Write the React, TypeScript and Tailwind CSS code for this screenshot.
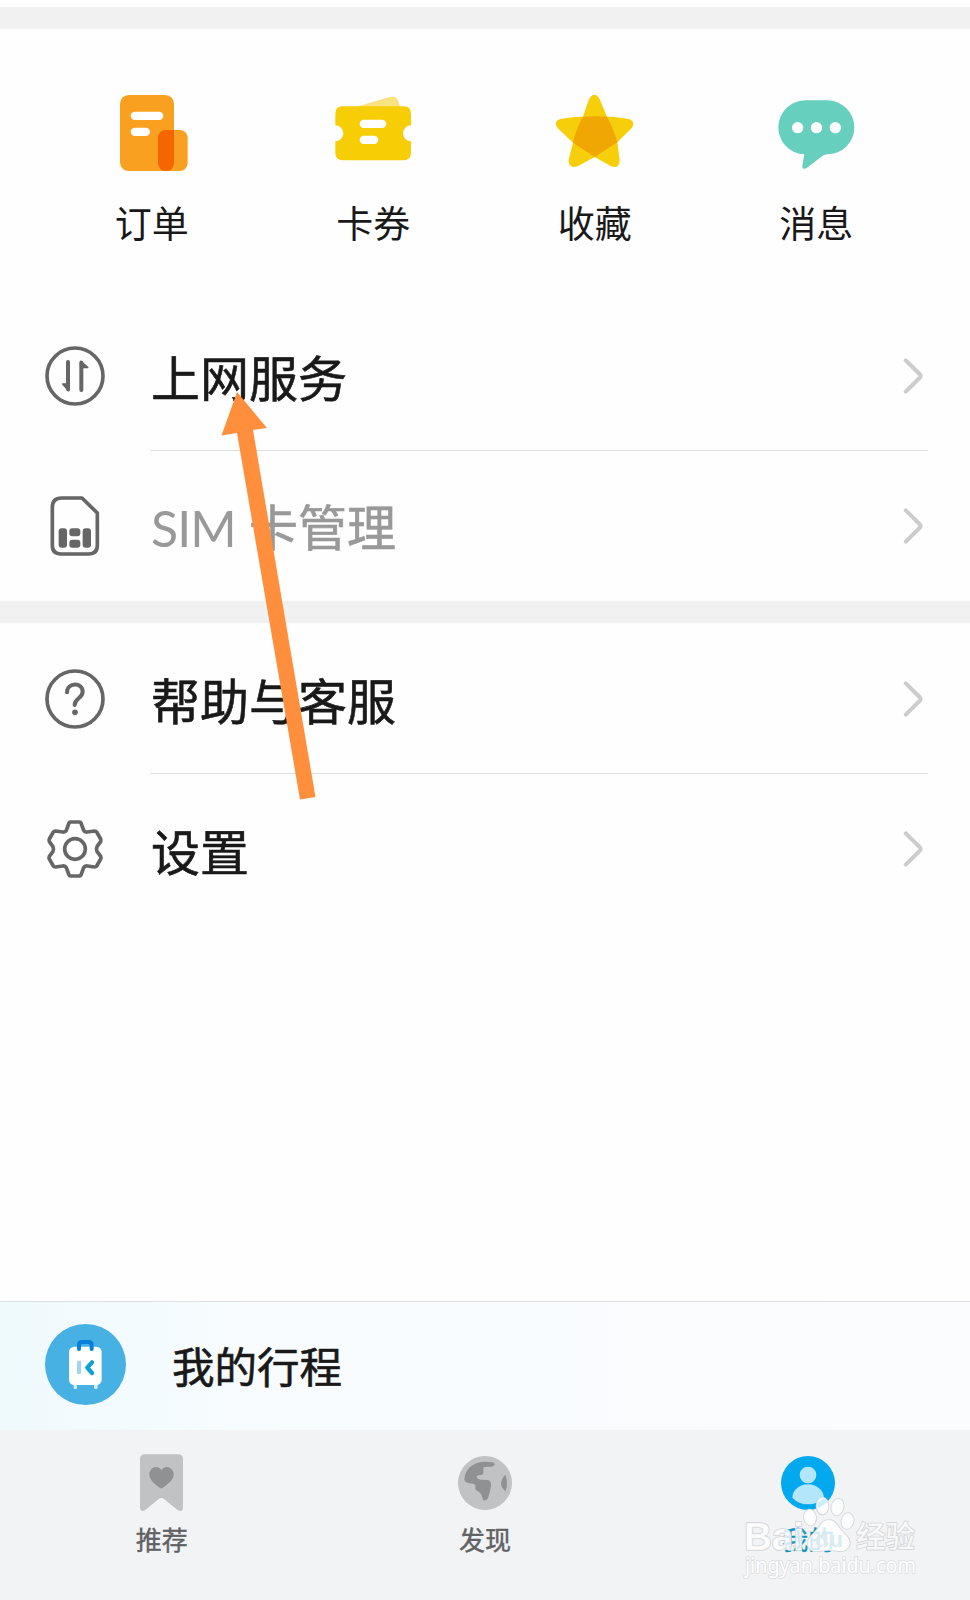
import type { ReactNode } from 'react';
import { clsx } from 'clsx';

interface MenuRowProps {
  icon: ReactNode;
  children: ReactNode;
  muted?: boolean;
  divider?: boolean;
}

function OrderIcon() {
  return (
    <svg viewBox="0 0 240 240" className="size-20">
      <rect x="24" y="6" width="162" height="228" rx="26" fill="#f9a021" />
      <rect x="138" y="111" width="89" height="123" rx="24" fill="#f9a021" />
      <rect x="138" y="111" width="48" height="123" rx="23" fill="#f56500" />
      <path d="M162 111 H186 V134 Z" fill="#f56500" />
      <rect x="56" y="56" width="98" height="25" rx="12.5" fill="#fff" />
      <rect x="56" y="104" width="58" height="25" rx="12.5" fill="#fff" />
    </svg>
  );
}

function CouponIcon() {
  return (
    <svg viewBox="0 0 240 240" className="size-20">
      <path d="M60 44 L170 12 Q192 7 197 26 L202 44 Z" fill="#fae182" />
      <path
        d="M29 40 H212 Q234 40 234 62 V97 A24 24 0 0 0 234 145 V180 Q234 202 212 202 H29 Q7 202 7 180 V145 A24 24 0 0 0 7 97 V62 Q7 40 29 40 Z"
        fill="#f7ce05"
      />
      <rect x="80" y="80" width="80" height="25" rx="12.5" fill="#fff" />
      <rect x="80" y="128" width="56" height="25" rx="12.5" fill="#fff" />
    </svg>
  );
}

function StarIcon() {
  return (
    <svg viewBox="0 0 240 240" className="size-20">
      <path
        d="M102 18 Q118 -8 134 18 L156 71 L187 148 L194 200 Q194 229 168 220 L119 192 L68 220 Q40 228 41 200 L54 149 L84 71 Z"
        fill="#f6cf0a"
      />
      <path
        d="M16 78 Q50 71 118 70 Q186 71 221 78 Q242 84 231 104 L187 148 L119 192 L54 149 L7 104 Q-5 84 16 78 Z"
        fill="#f6cf0a"
      />
      <path d="M84 71 Q120 69 156 71 Q178 112 187 148 L119 192 L54 149 Q62 110 84 71 Z" fill="#f1a703" />
    </svg>
  );
}

function MessageIcon() {
  return (
    <svg viewBox="0 0 240 240" className="size-20">
      <g transform="translate(3 0)">
        <path
          d="M88 22 H151 A81 81 0 0 1 151 184 Q140 184 132 192 L88 226 Q76 231 76 218 L82 184 A81 81 0 0 1 88 22 Z"
          fill="#66cfbe"
        />
        <circle cx="62" cy="104" r="17" fill="#fff" />
        <circle cx="118.500" cy="104" r="17" fill="#fff" />
        <circle cx="175" cy="104" r="17" fill="#fff" />
      </g>
    </svg>
  );
}

function DataIcon() {
  return (
    <svg viewBox="0 0 180 180" className="size-15" fill="none" stroke="#666" strokeLinecap="round" strokeLinejoin="round">
      <circle cx="90" cy="90" r="84" strokeWidth="11" />
      <path d="M69 48 V130" strokeWidth="12" />
      <path d="M71 134 L53 114 H71 Z" strokeWidth="5" fill="#666" />
      <path d="M109 132 V50" strokeWidth="12" />
      <path d="M107 46 L128 64 H107 Z" strokeWidth="5" fill="#666" />
    </svg>
  );
}

function SimIcon() {
  return (
    <svg viewBox="0 0 180 180" className="size-15">
      <path
        d="M50 6 H111 L157 51 V148 Q157 174 131 174 H48 Q22 174 22 148 V34 Q22 6 50 6 Z"
        fill="none"
        stroke="#666"
        strokeWidth="11"
        strokeLinejoin="round"
      />
      <g fill="#666">
        <rect x="41" y="97" width="25" height="58" rx="9" />
        <rect x="73" y="97" width="33" height="24" rx="9" />
        <rect x="73" y="131" width="33" height="24" rx="9" />
        <rect x="113" y="97" width="25" height="58" rx="9" />
      </g>
    </svg>
  );
}

function HelpIcon() {
  return (
    <svg viewBox="0 0 180 180" className="size-15" fill="none" stroke="#666" strokeLinecap="round">
      <circle cx="90" cy="90" r="84" strokeWidth="11" />
      <path d="M66 70 C67 39 113 39 113 68 C113 88 89 88 89 108" strokeWidth="12" />
      <circle cx="90" cy="130" r="8.500" fill="#666" stroke="none" />
    </svg>
  );
}

function GearIcon() {
  return (
    <svg viewBox="0 0 180 180" className="size-15" fill="none" stroke="#666" strokeWidth="11" strokeLinejoin="round">
      <path d="M76 9 H104 Q107 9 108 12 L116 34 Q119 40 127 39 L149 36 Q153 36 155 39 L167 60 Q169 64 167 68 L156 83 Q153 90 156 97 L167 112 Q169 116 167 120 L155 141 Q153 144 149 144 L127 141 Q119 140 116 146 L108 168 Q107 171 104 171 H76 Q73 171 72 168 L64 146 Q61 140 53 141 L31 144 Q27 144 25 141 L13 120 Q11 116 13 112 L24 97 Q27 90 24 83 L13 68 Q11 64 13 60 L25 39 Q27 36 31 36 L53 39 Q61 40 64 34 L72 12 Q73 9 76 9 Z" />
      <circle cx="90" cy="90" r="31" />
    </svg>
  );
}

function Chevron() {
  return (
    <svg viewBox="0 0 20 36" className="h-9 w-5" fill="none" stroke="#ccc" strokeWidth="4" strokeLinecap="round" strokeLinejoin="round">
      <path d="M2.800 2.400 L17 16.500 Q18.200 18 17 19.500 L2.800 33.600" />
    </svg>
  );
}

function SuitcaseIcon() {
  return (
    <svg viewBox="0 0 243 243" className="-mt-[3px] size-[81px]">
      <circle cx="121.500" cy="121.500" r="121.500" fill="#47b1e3" />
      <path d="M86 180 H96 V191 Q96 195 91 195 Q86 195 86 191 Z M147 180 H158 V191 Q158 195 153 195 Q147 195 147 191 Z" fill="#d5effa" />
      <rect x="72" y="68" width="98" height="115" rx="16" fill="#fff" />
      <path d="M102 75 V63 Q102 54 111 54 H131 Q140 54 140 63 V75" fill="none" stroke="#0a7fd8" strokeWidth="12" strokeLinecap="round" />
      <rect x="96" y="110" width="12" height="40" rx="3" fill="#a0d6ec" />
      <path d="M141 115 L127 131 L141 147" fill="none" stroke="#0ea3cf" strokeWidth="13" strokeLinecap="round" strokeLinejoin="round" />
    </svg>
  );
}

function BookmarkIcon() {
  return (
    <svg viewBox="0 0 180 180" className="size-15">
      <g transform="translate(-2 0)">
        <path d="M40 4 H141 Q155 4 155 18 V161 Q155 180 139 171 L98 138 Q90 132 82 138 L42 171 Q26 180 26 161 V18 Q26 4 40 4 Z" fill="#c1c2c4" />
        <path d="M90 51 C102 34 127 43 127 65 C127 82 104 96 95 104 Q90 108 85 104 C76 96 54 82 54 65 C54 43 79 34 90 51 Z" fill="#909193" />
      </g>
    </svg>
  );
}

function GlobeIcon() {
  return (
    <svg viewBox="0 0 180 180" className="size-15">
      <circle cx="90" cy="90" r="81" fill="#c1c2c4" />
      <g fill="#909193">
        <path d="M28 79 Q29 58 45 42 Q70 21 112 28 Q121 31 118 37 Q116 42 107 41 L89 42 Q83 43 85 50 V60 Q85 66 78 66 Q66 66 65 72 Q66 79 78 80 L98 81 Q109 83 108 97 Q107 115 99 135 Q96 143 90 142 Q84 143 83 137 Q81 125 75 119 Q62 113 61 106 Q63 94 55 92 Q28 92 28 79 Z" />
        <path d="M151 65 Q156 78 156 90 Q156 102 152 115 Q139 106 138 91 Q139 77 151 65 Z" />
      </g>
    </svg>
  );
}

function ProfileIcon() {
  return (
    <svg viewBox="0 0 180 180" className="size-15">
      <circle cx="90" cy="90" r="81" fill="#03a9ef" />
      <g fill="#b3e6fb">
        <circle cx="90" cy="66" r="25" />
        <path d="M43 134 C46 80 133 80 138 134 Q118 154 90 154 Q62 154 43 134 Z" />
      </g>
    </svg>
  );
}

const shortcuts = [
  { label: '订单', icon: <OrderIcon /> },
  { label: '卡券', icon: <CouponIcon /> },
  { label: '收藏', icon: <StarIcon /> },
  { label: '消息', icon: <MessageIcon /> },
];

const tabs = [
  { label: '推荐', icon: <BookmarkIcon />, active: false },
  { label: '发现', icon: <GlobeIcon />, active: false },
  { label: '我的', icon: <ProfileIcon />, active: true },
];

function MenuRow({ icon, children, muted, divider }: MenuRowProps) {
  return (
    <div className={clsx('flex pl-[45px]', divider ? 'h-[151px]' : 'h-[150px]')}>
      <div className="flex w-[105px] items-center">{icon}</div>
      <div
        className={clsx(
          'mr-[42px] flex flex-1 items-center justify-between border-b pt-px pr-[5.5px]',
          divider ? 'border-[#dedede]' : 'border-transparent',
        )}
      >
        <span
          className={clsx(
            'ml-px flex text-[49px] leading-none font-normal whitespace-pre [-webkit-text-stroke-width:0.6px]',
            muted ? 'text-[#999]' : 'text-[#191919]',
          )}
        >
          {children}
        </span>
        <Chevron />
      </div>
    </div>
  );
}

function Watermark() {
  return (
    <svg
      viewBox="0 0 190 100"
      className="pointer-events-none absolute right-[45px] bottom-[10px] h-[100px] w-[190px] overflow-visible"
    >
      <g fill="#fff" fillOpacity="0.8" stroke="#d3d5d8" strokeWidth="1.600" paintOrder="stroke">
        <ellipse cx="75" cy="27.500" rx="6" ry="8" transform="rotate(-8 75 27.500)" />
        <ellipse cx="87.500" cy="16" rx="6" ry="8.500" />
        <ellipse cx="102.500" cy="17" rx="6" ry="8.500" transform="rotate(12 102.500 17)" />
        <ellipse cx="112.500" cy="31" rx="6" ry="8" transform="rotate(12 112.500 31)" />
        <path d="M94 30 C101 30 103 37 108 42 C114 47 117 53 113 58 C109 64 101 60 94 60 C86 60 79 64 74 58 C70 52 75 47 80 42 C85 37 86 30 94 30 Z" />
        <text x="9" y="60" fontSize="39" fontWeight="700" fontFamily="Liberation Sans, sans-serif" textLength="60" lengthAdjust="spacingAndGlyphs">
          Bai
        </text>
        <text x="121" y="57" fontSize="29.500" fontWeight="500" fontFamily="Noto Sans CJK SC, sans-serif" textLength="59">
          经验
        </text>
      </g>
      <text
        x="10"
        y="83"
        fontSize="21"
        fontFamily="Noto Sans, sans-serif"
        textLength="171"
        lengthAdjust="spacingAndGlyphs"
        fill="#fff"
        stroke="#dcdee1"
        strokeWidth="1.600"
        paintOrder="stroke"
      >
        jingyan.baidu.com
      </text>
      <text x="80" y="57" fontSize="22" fontWeight="700" fontFamily="Liberation Sans, sans-serif" fill="#dcebf0" textLength="28">
        du
      </text>
    </svg>
  );
}

export default function App() {
  return (
    <div className="relative flex h-[1600px] w-[970px] flex-col overflow-hidden bg-[#fefefe] font-['Noto_Sans_CJK_SC',sans-serif]">
      <div className="mt-[7px] h-[22px] bg-[#f1f1f1]" />

      <div className="grid h-[271px] grid-cols-4 pt-[63.5px] pr-[43px] pl-[41px]">
        {shortcuts.map((item) => (
          <div key={item.label} className="flex flex-col items-center">
            {item.icon}
            <span className="mt-[31px] text-[37px] leading-9 text-[#191919]">{item.label}</span>
          </div>
        ))}
      </div>

      <MenuRow icon={<DataIcon />} divider>
        上网服务
      </MenuRow>
      <MenuRow icon={<SimIcon />} muted>
        <span className="mt-[3px] w-[98px] font-['Lato','Noto_Sans_CJK_SC',sans-serif] text-[50px] tracking-[-1px] [-webkit-text-stroke-width:0]">
          SIM
        </span>
        卡管理
      </MenuRow>
      <div className="h-[22px] bg-[#f1f1f1]" />
      <MenuRow icon={<HelpIcon />} divider>
        帮助与客服
      </MenuRow>
      <MenuRow icon={<GearIcon />}>设置</MenuRow>

      <div className="mt-auto flex h-[129px] items-center border-t border-[#dcdfe3] bg-linear-to-r from-[#effafd] via-[#f9fcfe] via-30% to-[#fafcfe] pl-[45px]">
        <SuitcaseIcon />
        <span className="-mt-0.5 ml-[46px] text-[42.500px] leading-none font-normal text-[#191919] [-webkit-text-stroke-width:0.6px]">
          我的行程
        </span>
      </div>

      <div className="grid h-[170px] grid-cols-3 bg-[#f2f3f5] pt-[23px]">
        {tabs.map((tab) => (
          <div key={tab.label} className="flex flex-col items-center">
            {tab.icon}
            <span
              className={clsx(
                'mt-[13px] text-[26px] leading-[26px] font-normal [-webkit-text-stroke-width:0.4px]',
                tab.active ? 'text-[#1596c0]' : 'text-[#606163]',
              )}
            >
              {tab.label}
            </span>
          </div>
        ))}
      </div>

      {/* Pointer drawn over the menu, aimed at the first row */}
      <svg viewBox="0 0 100 410" className="pointer-events-none absolute top-[392px] left-[220px] h-[410px] w-[100px]">
        <path d="M17 0 L47 36 L33 38 L95.500 405 L80 407.500 L17 41 L1.500 43.500 Z" fill="#ff8f3c" />
      </svg>
      <Watermark />
    </div>
  );
}
